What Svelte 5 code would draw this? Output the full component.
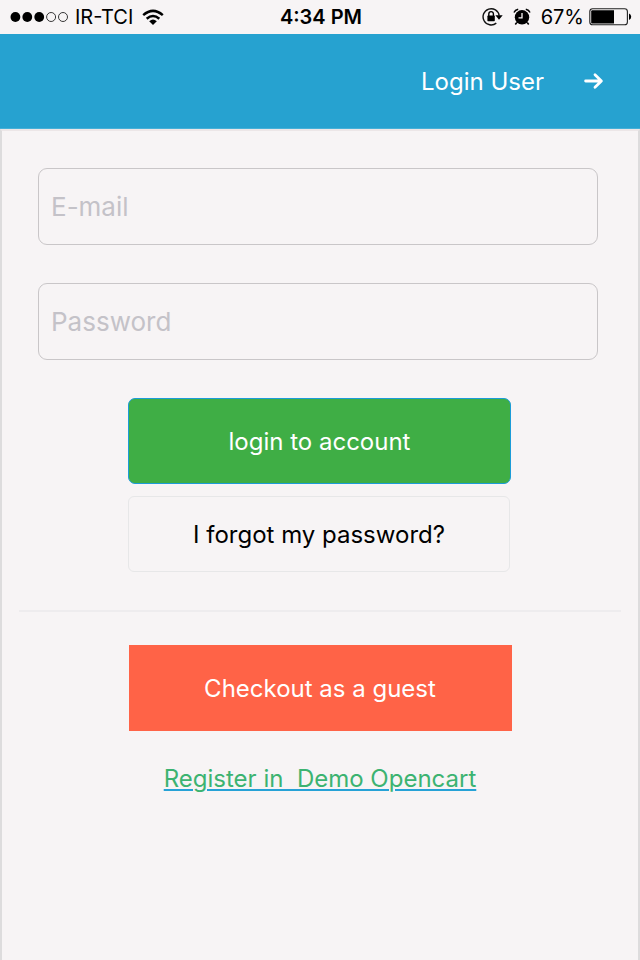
<script>
  let email = $state('');
  let password = $state('');
</script>

<div class="screen">
  <div class="status">
    <div class="left">
      <svg width="60" height="12" viewBox="0 0 60 12">
        {#each [0, 1, 2, 3, 4] as i}
          <circle cx={5.4 + i * 11.9} cy="6" r={i < 3 ? 4.9 : 4.5} fill={i < 3 ? '#000' : 'none'} stroke="#222" stroke-width={i < 3 ? 0 : 0.9} />
        {/each}
      </svg>
      <span class="carrier">IR-TCI</span>
      <svg class="wifi" width="22" height="17" viewBox="0 0 22 17">
        <g fill="none" stroke="#000" stroke-width="2.5">
          <path d="M1.2 6.1Q11 -2.4 20.8 6.1" />
          <path d="M4.7 9.8Q11 4.2 17.3 9.8" />
        </g>
        <path d="M7.2 12.2Q11 9 14.8 12.2L11 16Z" />
      </svg>
    </div>
    <span class="time">4:34 PM</span>
    <div class="right">
      <svg width="21" height="20" viewBox="0 0 21 20">
        <path d="M14.3 16.1A8.1 8.1 0 1 1 17.2 8.7" fill="none" stroke="#111" stroke-width="1.4" />
        <path d="M13.4 8.3H20.7L17 12.8Z" />
        <rect x="5.4" y="8.6" width="7.4" height="5.6" rx=".6" />
        <path d="M6.8 9V6.9a2.3 2.3 0 0 1 4.6 0V9" fill="none" stroke="#000" stroke-width="1.4" />
      </svg>
      <svg class="alarm" width="18" height="18" viewBox="0 0 18 18">
        <circle cx="9" cy="9.3" r="7.2" />
        <path d="M1 4.6Q2 2 5.2 1.3M17 4.6Q16 2 12.8 1.3" fill="none" stroke="#000" stroke-width="1.5" />
        <path d="M3.8 14.6L2.3 16.5M14.2 14.6L15.7 16.5" stroke="#000" stroke-width="1.6" />
        <path d="M9 5V9.8H5.5" fill="none" stroke="#f7f4f5" stroke-width="1.3" />
      </svg>
      <span class="percent">67%</span>
      <svg class="battery" width="43" height="18" viewBox="0 0 43 18">
        <rect x=".8" y=".8" width="37.6" height="16" rx="2.8" fill="none" stroke="#222" stroke-width="1.1" />
        <path d="M3.4 2.2H25V15.4H3.4Q2.2 15.4 2.2 14.2V3.4Q2.2 2.2 3.4 2.2Z" />
        <path d="M40 5.6Q42.2 6.6 42.2 8.8T40 12Z" />
      </svg>
    </div>
  </div>

  <header>
    <span class="title">Login User</span>
    <svg width="20" height="18" viewBox="0 0 20 18">
      <path d="M1.6 9H17M11 2.8L17.4 9L11 15.2" fill="none" stroke="#fff" stroke-width="2.8" stroke-linecap="round" stroke-linejoin="round" />
    </svg>
  </header>

  <main>
    <form onsubmit={(e) => e.preventDefault()}>
      <input class="email" type="email" placeholder="E-mail" bind:value={email} />
      <input class="password" type="password" placeholder="Password" bind:value={password} />
      <button class="login"><span>login to account</span></button>
      <button class="forgot" type="button"><span>I forgot my password?</span></button>
    </form>
    <div class="rule"></div>
    <button class="guest" type="button"><span>Checkout as a guest</span></button>
    <a href="#register">Register in&nbsp; Demo Opencart</a>
  </main>
</div>

<style>
  :global(body) {
    margin: 0;
    background: #f7f4f5;
  }
  .screen {
    width: 640px;
    height: 960px;
    display: flex;
    flex-direction: column;
    overflow: hidden;
    background: #f7f4f5;
    font-family: Inter, 'Liberation Sans', sans-serif;
    color: #000;
  }
  svg {
    display: block;
    flex: none;
  }
  span,
  a {
    white-space: nowrap;
  }
  .status {
    height: 34px;
    box-sizing: border-box;
    padding: 0 8px 0 10px;
    display: grid;
    grid-template-columns: 1fr auto 1fr;
    align-items: center;
    font-size: 20px;
    line-height: 34px;
  }
  .left,
  .right {
    display: flex;
    align-items: center;
  }
  .right {
    justify-content: flex-end;
  }
  .carrier {
    margin-left: 5px;
  }
  .wifi {
    margin-left: 9px;
  }
  .time {
    font-weight: 600;
  }
  .alarm {
    margin-left: 10px;
  }
  .percent {
    margin-left: 10px;
  }
  .battery {
    margin-left: 5px;
  }
  header {
    height: 95px;
    box-sizing: border-box;
    padding: 0 36px 0 0;
    display: flex;
    justify-content: flex-end;
    align-items: center;
    background: #26a2d0;
    border-bottom: 1px solid #45b0d8;
    color: #fff;
    font-size: 24px;
  }
  header svg {
    margin-left: 40px;
  }
  main {
    flex: 1;
    box-sizing: border-box;
    padding: 37px 40px 0 36px;
    border: solid #dddcdd;
    border-width: 2px 2px 0;
    border-top-color: #ece6e7;
    display: flex;
    flex-direction: column;
    align-items: center;
  }
  form {
    width: 560px;
    display: flex;
    flex-direction: column;
  }
  input {
    width: 560px;
    height: 77px;
    box-sizing: border-box;
    margin: 0 0 38px;
    padding: 0 12px;
    border: 1px solid #c9c6c8;
    border-radius: 9px;
    background: transparent;
    font: 26px Inter, 'Liberation Sans', sans-serif;
    outline: none;
  }
  input::placeholder {
    color: #c4c2c8;
    opacity: 1;
  }
  button {
    width: 383px;
    height: 86px;
    box-sizing: border-box;
    margin: 0;
    padding: 0;
    border: 0;
    font: 24px Inter, 'Liberation Sans', sans-serif;
    color: #fff;
  }
  .login {
    margin-left: 90px;
    background: #3fae45;
    border: 1.5px solid #1c9cd8;
    border-radius: 7px;
  }
  .forgot {
    width: 382px;
    height: 76px;
    margin: 12px 0 0 90px;
    color: #000;
    background: transparent;
    border: 1px solid #e7e7e8;
    border-radius: 6px;
  }
  .rule {
    width: 602px;
    height: 2px;
    margin: 38px -20px 0;
    background: #eeecee;
    position: relative;
    left: 2px;
  }
  .guest {
    margin: 33px -2px 0 2px;
    background: #ff6347;
  }
  a {
    margin: 33px -2px 0 2px;
    font-size: 24px;
    line-height: 29px;
    color: #3cb371;
    text-decoration: underline #26a2d6 2px;
    text-underline-offset: 2px;
  }
</style>
